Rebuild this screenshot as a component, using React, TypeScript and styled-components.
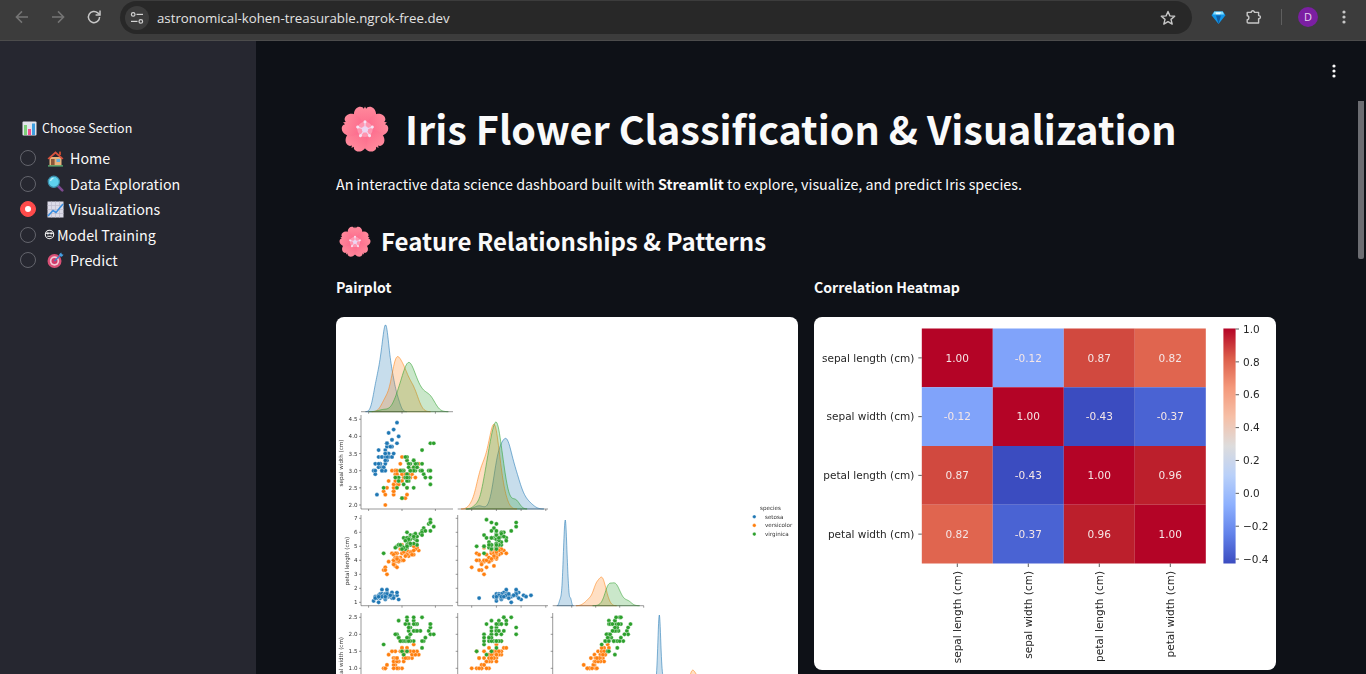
import React from "react";
import styled, { createGlobalStyle } from "styled-components";

const Global = createGlobalStyle`
  html, body { margin: 0; padding: 0; height: 100%; overflow: hidden; background: #0e1117; }
  * { box-sizing: border-box; }
  #root { height: 100%; }
`;

const SANS = `"Noto Sans CJK SC", "Noto Sans", sans-serif`;
const MPL = `"DejaVu Sans", sans-serif`;

const Page = styled.div`
  display: flex;
  flex-direction: column;
  height: 674px;
  overflow: hidden;
  font-family: ${SANS};
  color: #fafafa;
`;

/* ---------- browser chrome ---------- */
const Toolbar = styled.header`
  display: flex;
  align-items: flex-start;
  flex: 0 0 41px;
  height: 41px;
  background: #3c3c3c;
  border-bottom: 1px solid #4c4c4c;
`;
const NavButton = styled.span<{ $w: number }>`
  display: flex;
  align-items: center;
  justify-content: center;
  flex: 0 0 ${(p) => p.$w}px;
  height: 34px;
`;
const Omnibox = styled.div`
  display: flex;
  align-items: center;
  flex: 0 0 1072px;
  height: 33px;
  margin: 1px 0 0 4px;
  padding: 0 16px 0 5px;
  background: #282828;
  border-radius: 17px;
`;
const TuneBadge = styled.span`
  display: flex;
  align-items: center;
  justify-content: center;
  flex: 0 0 24px;
  height: 24px;
  border-radius: 50%;
  background: #3c3c3c;
`;
const Url = styled.span`
  flex: 1;
  margin-left: 8px;
  font: 400 13.25px/20px "Open Sans", sans-serif;
  color: #e3e3e3;
`;
const Divider = styled.span`
  flex: 0 0 1px;
  height: 16px;
  margin: 9px 16px 0 17px;
  background: #5f5f5f;
`;
const Avatar = styled.span`
  display: flex;
  align-items: center;
  justify-content: center;
  flex: 0 0 20px;
  height: 20px;
  margin-top: 7px;
  border-radius: 50%;
  background: #7b1fa2;
  color: #e8d5f0;
  font: 400 11px/20px "Open Sans", sans-serif;
`;

const Body = styled.div`
  display: flex;
  flex: 1;
  min-height: 0;
`;

/* ---------- sidebar ---------- */
const Sidebar = styled.aside`
  flex: 0 0 256px;
  background: #262730;
  padding: 77px 0 0 20px;
`;
const SectionLabel = styled.div`
  display: flex;
  align-items: center;
  gap: 5px;
  height: 20px;
  padding-left: 2px;
  font-size: 12.5px;
  line-height: 20px;
  color: #fafafa;
  margin-bottom: 7.5px;
`;
const RadioRow = styled.div<{ $gap: number; $labelGap: number }>`
  display: flex;
  align-items: center;
  height: 25.5px;
  font-size: 14.3px;
  line-height: 20px;
  color: #fafafa;
  & > svg { margin-left: ${(p) => p.$gap}px; margin-right: ${(p) => p.$labelGap}px; flex: none; }
`;
const RadioDot = styled.span<{ $on?: boolean }>`
  display: flex;
  align-items: center;
  justify-content: center;
  flex: 0 0 16px;
  height: 16px;
  border-radius: 50%;
  border: 1px solid ${(p) => (p.$on ? "#ff4b4b" : "#63646c")};
  background: ${(p) => (p.$on ? "#ff4b4b" : "transparent")};
  &::after {
    content: "";
    display: ${(p) => (p.$on ? "block" : "none")};
    width: 6px;
    height: 6px;
    border-radius: 50%;
    background: #fff;
  }
`;

/* ---------- main ---------- */
const Main = styled.main`
  position: relative;
  flex: 1;
  min-width: 0;
  overflow: hidden;
  background: #0e1117;
  padding: 0 90px 0 80px;
`;
const Kebab = styled.span`
  position: absolute;
  top: 23px;
  right: 30px;
  display: flex;
`;
const Thumb = styled.span`
  position: absolute;
  top: 60px;
  right: 2px;
  width: 6px;
  height: 158px;
  background: #6c6d72;
  border-radius: 0 0 2px 2px;
`;
const Title = styled.h1`
  display: flex;
  align-items: center;
  margin: 58px 0 0;
  height: 58px;
  padding-left: 5px;
  font-size: 39.5px;
  line-height: 58px;
  font-weight: 700;
  color: #fafafa;
  white-space: nowrap;
  & > svg { margin-right: 16px; flex: none; }
`;
const Lead = styled.p`
  margin: 15px 0 0;
  height: 24px;
  font-size: 14.3px;
  line-height: 24px;
  color: #fafafa;
  white-space: nowrap;
  & b { font-weight: 700; }
`;
const SubTitle = styled.h2`
  display: flex;
  align-items: center;
  margin: 25px 0 0;
  height: 40px;
  padding-left: 3px;
  font-size: 24px;
  line-height: 40px;
  font-weight: 600;
  color: #fafafa;
  white-space: nowrap;
  & > svg { margin-right: 10px; flex: none; }
`;
const Columns = styled.div`
  display: grid;
  grid-template-columns: 462px 462px;
  column-gap: 16px;
  margin-top: 16px;
`;
const ColHead = styled.h3`
  margin: 0 0 20px;
  height: 20px;
  font-size: 14.1px;
  line-height: 20px;
  font-weight: 600;
  color: #fafafa;
`;
const ImageCard = styled.div<{ $h: number }>`
  width: 462px;
  height: ${(p) => p.$h}px;
  background: #fff;
  border-radius: 8px;
  overflow: hidden;
  & > svg { display: block; }
`;

/* ---------- emoji drawings ---------- */
const Blossom = ({ size }: { size: number }) => {
  const id = `bl${size}`;
  const petal =
    "M50 53 C38 44 25 34 27 20 C28 9 38 3 45 7 L47.5 10 L50 5 L52.5 10 L55 7 C62 3 72 9 73 20 C75 34 62 44 50 53Z";
  return (
    <svg width={size} height={size} viewBox="0 0 100 100">
      <defs>
        <linearGradient id={id} x1="0" y1="0" x2="0" y2="1">
          <stop offset="0" stopColor="#ff8a9c" />
          <stop offset="0.65" stopColor="#fd7390" />
          <stop offset="1" stopColor="#ff5b92" />
        </linearGradient>
      </defs>
      <g fill={`url(#${id})`}>
        {[0, 72, 144, 216, 288].map((a) => (
          <path key={a} d={petal} transform={`rotate(${a} 50 53)`} />
        ))}
      </g>
      <circle cx="50" cy="53" r="16" fill="#ffa9bd" opacity="0.7" />
      <g stroke="#f0d6f0" strokeWidth="2.4" strokeLinecap="round">
        {[0, 72, 144, 216, 288].map((a) => (
          <line key={a} x1="50" y1="53" x2="50" y2="38" transform={`rotate(${a} 50 53)`} />
        ))}
      </g>
      <g fill="#f5e3f4">
        {[0, 72, 144, 216, 288].map((a) => (
          <circle key={a} cx="50" cy="37" r="3.2" transform={`rotate(${a} 50 53)`} />
        ))}
      </g>
      <circle cx="50" cy="53" r="6.5" fill="#ecd6f2" />
    </svg>
  );
};

const BarsEmoji = () => (
  <svg width="15" height="15" viewBox="0 0 15 15">
    <rect x="0.5" y="0.5" width="14" height="14" rx="1" fill="#e4e4ec" />
    <rect x="2" y="4" width="3" height="10" fill="#7ed07a" />
    <rect x="6" y="8" width="3" height="6" fill="#f0508f" />
    <rect x="10" y="2.5" width="3" height="11.5" fill="#3f9fe0" />
  </svg>
);
const HouseEmoji = () => (
  <svg width="17" height="17" viewBox="0 0 17 17">
    <rect x="2.5" y="7" width="12" height="8.5" fill="#e8b37c" />
    <path d="M0.5 8.5 L8.5 1.2 L16.5 8.5 L15 9.4 L8.5 3.8 L2 9.4Z" fill="#d9533e" />
    <rect x="12" y="1.6" width="2" height="3.4" fill="#c2482f" />
    <rect x="4" y="9" width="3.6" height="6.4" fill="#8a5738" />
    <rect x="9.5" y="9" width="3.6" height="3" fill="#5fb0dc" />
    <rect x="1" y="15.3" width="15" height="1.2" fill="#5dbb78" />
  </svg>
);
const LensEmoji = () => (
  <svg width="17" height="17" viewBox="0 0 17 17">
    <line x1="10.5" y1="10.5" x2="15.3" y2="15.3" stroke="#7d4a8f" strokeWidth="2.6" strokeLinecap="round" />
    <circle cx="6.8" cy="6.8" r="5.6" fill="#5ed2ee" stroke="#3d8ba8" strokeWidth="1.2" />
    <path d="M3.5 6 A3.6 3.6 0 0 1 6.5 3.2" stroke="#c4f1fb" strokeWidth="1.2" fill="none" />
  </svg>
);
const ChartEmoji = () => (
  <svg width="17" height="17" viewBox="0 0 17 17">
    <rect x="0.5" y="0.5" width="16" height="16" fill="#dcdbe8" />
    <path d="M0.5 4.5H16.5M0.5 8.5H16.5M0.5 12.5H16.5M4.5 0.5V16.5M8.5 0.5V16.5M12.5 0.5V16.5" stroke="#bdbccd" strokeWidth="0.7" />
    <path d="M1 15 L6 9.5 L9 11.5 L16 3" fill="none" stroke="#3a8ee0" strokeWidth="1.6" />
  </svg>
);
const BotGlyph = () => (
  <svg width="11" height="11" viewBox="0 0 10 11">
    <circle cx="5" cy="5.5" r="4.2" fill="none" stroke="#f2f2f2" strokeWidth="1.1" />
    <path d="M1.5 4.2H8.5" stroke="#f2f2f2" strokeWidth="1.2" />
    <circle cx="3.3" cy="4.6" r="1" fill="#f2f2f2" />
    <circle cx="6.7" cy="4.6" r="1" fill="#f2f2f2" />
    <path d="M2.8 7.3H7.2" stroke="#f2f2f2" strokeWidth="1.1" />
  </svg>
);
const TargetEmoji = () => (
  <svg width="17" height="17" viewBox="0 0 17 17">
    <circle cx="7.5" cy="9" r="7" fill="#d94f75" />
    <circle cx="7.5" cy="9" r="4.7" fill="#f3c9d4" />
    <circle cx="7.5" cy="9" r="3" fill="#d2386a" />
    <line x1="7.5" y1="9" x2="14" y2="2.5" stroke="#3c84c8" strokeWidth="1.3" />
    <path d="M12.2 2.2 L14.2 0.4 L14.8 2.2 L16.6 2.8 L14.8 4.8 L12.8 4.2Z" fill="#45a0e6" />
  </svg>
);

/* ---------- iris data ---------- */
const RAW: number[][][] = [
  [[5.1,3.5,1.4,.2],[4.9,3,1.4,.2],[4.7,3.2,1.3,.2],[4.6,3.1,1.5,.2],[5,3.6,1.4,.2],[5.4,3.9,1.7,.4],[4.6,3.4,1.4,.3],[5,3.4,1.5,.2],[4.4,2.9,1.4,.2],[4.9,3.1,1.5,.1],[5.4,3.7,1.5,.2],[4.8,3.4,1.6,.2],[4.8,3,1.4,.1],[4.3,3,1.1,.1],[5.8,4,1.2,.2],[5.7,4.4,1.5,.4],[5.4,3.9,1.3,.4],[5.1,3.5,1.4,.3],[5.7,3.8,1.7,.3],[5.1,3.8,1.5,.3],[5.4,3.4,1.7,.2],[5.1,3.7,1.5,.4],[4.6,3.6,1,.2],[5.1,3.3,1.7,.5],[4.8,3.4,1.9,.2],[5,3,1.6,.2],[5,3.4,1.6,.4],[5.2,3.5,1.5,.2],[5.2,3.4,1.4,.2],[4.7,3.2,1.6,.2],[4.8,3.1,1.6,.2],[5.4,3.4,1.5,.4],[5.2,4.1,1.5,.1],[5.5,4.2,1.4,.2],[4.9,3.1,1.5,.1],[5,3.2,1.2,.2],[5.5,3.5,1.3,.2],[4.9,3.1,1.5,.1],[4.4,3,1.3,.2],[5.1,3.4,1.5,.2],[5,3.5,1.3,.3],[4.5,2.3,1.3,.3],[4.4,3.2,1.3,.2],[5,3.5,1.6,.6],[5.1,3.8,1.9,.4],[4.8,3,1.4,.3],[5.1,3.8,1.6,.2],[4.6,3.2,1.4,.2],[5.3,3.7,1.5,.2],[5,3.3,1.4,.2]],
  [[7,3.2,4.7,1.4],[6.4,3.2,4.5,1.5],[6.9,3.1,4.9,1.5],[5.5,2.3,4,1.3],[6.5,2.8,4.6,1.5],[5.7,2.8,4.5,1.3],[6.3,3.3,4.7,1.6],[4.9,2.4,3.3,1],[6.6,2.9,4.6,1.3],[5.2,2.7,3.9,1.4],[5,2,3.5,1],[5.9,3,4.2,1.5],[6,2.2,4,1],[6.1,2.9,4.7,1.4],[5.6,2.9,3.6,1.3],[6.7,3.1,4.4,1.4],[5.6,3,4.5,1.5],[5.8,2.7,4.1,1],[6.2,2.2,4.5,1.5],[5.6,2.5,3.9,1.1],[5.9,3.2,4.8,1.8],[6.1,2.8,4,1.3],[6.3,2.5,4.9,1.5],[6.1,2.8,4.7,1.2],[6.4,2.9,4.3,1.3],[6.6,3,4.4,1.4],[6.8,2.8,4.8,1.4],[6.7,3,5,1.7],[6,2.9,4.5,1.5],[5.7,2.6,3.5,1],[5.5,2.4,3.8,1.1],[5.5,2.4,3.7,1],[5.8,2.7,3.9,1.2],[6,2.7,5.1,1.6],[5.4,3,4.5,1.5],[6,3.4,4.5,1.6],[6.7,3.1,4.7,1.5],[6.3,2.3,4.4,1.3],[5.6,3,4.1,1.3],[5.5,2.5,4,1.3],[5.5,2.6,4.4,1.2],[6.1,3,4.6,1.4],[5.8,2.6,4,1.2],[5,2.3,3.3,1],[5.6,2.7,4.2,1.3],[5.7,3,4.2,1.2],[5.7,2.9,4.2,1.3],[6.2,2.9,4.3,1.3],[5.1,2.5,3,1.1],[5.7,2.8,4.1,1.3]],
  [[6.3,3.3,6,2.5],[5.8,2.7,5.1,1.9],[7.1,3,5.9,2.1],[6.3,2.9,5.6,1.8],[6.5,3,5.8,2.2],[7.6,3,6.6,2.1],[4.9,2.5,4.5,1.7],[7.3,2.9,6.3,1.8],[6.7,2.5,5.8,1.8],[7.2,3.6,6.1,2.5],[6.5,3.2,5.1,2],[6.4,2.7,5.3,1.9],[6.8,3,5.5,2.1],[5.7,2.5,5,2],[5.8,2.8,5.1,2.4],[6.4,3.2,5.3,2.3],[6.5,3,5.5,1.8],[7.7,3.8,6.7,2.2],[7.7,2.6,6.9,2.3],[6,2.2,5,1.5],[6.9,3.2,5.7,2.3],[5.6,2.8,4.9,2],[7.7,2.8,6.7,2],[6.3,2.7,4.9,1.8],[6.7,3.3,5.7,2.1],[7.2,3.2,6,1.8],[6.2,2.8,4.8,1.8],[6.1,3,4.9,1.8],[6.4,2.8,5.6,2.1],[7.2,3,5.8,1.6],[7.4,2.8,6.1,1.9],[7.9,3.8,6.4,2],[6.4,2.8,5.6,2.2],[6.3,2.8,5.1,1.5],[6.1,2.6,5.6,1.4],[7.7,3,6.1,2.3],[6.3,3.4,5.6,2.4],[6.4,3.1,5.5,1.8],[6,3,4.8,1.8],[6.9,3.1,5.4,2.1],[6.7,3.1,5.6,2.4],[6.9,3.1,5.1,2.3],[5.8,2.7,5.1,1.9],[6.8,3.2,5.9,2.3],[6.7,3.3,5.7,2.5],[6.7,3,5.2,2.3],[6.3,2.5,5,1.9],[6.5,3,5.2,2],[6.2,3.4,5.4,2.3],[5.9,3,5.1,1.8]],
];
const HUES = ["#1f77b4", "#ff7f0e", "#2ca02c"];

const xScale = [
  (v: number) => 368.6 + 16.7 * (v - 4),
  (v: number) => 471.7 + 24.7 * (v - 2),
  (v: number) => 571.7 + 12 * (v - 2),
  (v: number) => 653.4 + 29.5 * v,
];
const yScale = [
  (_: number) => 0,
  (v: number) => 505 - 34.3 * (v - 2),
  (v: number) => 602.3 - 14 * (v - 1),
  (v: number) => 668.3 - 34 * (v - 1),
];
const colX: [number, number][] = [[361, 453], [457.7, 548], [552.7, 643.7], [648, 740]];
const rowY: [number, number][] = [[320, 411.7], [415, 509], [515, 605.7], [613, 705]];
const diagPeak = [325, 422, 520, 615];
const xTicks = [[4, 6, 8], [2, 3, 4, 5], [2, 4, 6, 8], [0, 1, 2, 3]];
const yTicks: Record<number, number[]> = {
  1: [2, 2.5, 3, 3.5, 4, 4.5],
  2: [1, 2, 3, 4, 5, 6, 7],
  3: [1, 1.5, 2, 2.5],
};
const yLabels: Record<number, { t: string; x: number; y: number }> = {
  1: { t: "sepal width (cm)", x: 343, y: 463 },
  2: { t: "petal length (cm)", x: 349, y: 561 },
  3: { t: "petal width (cm)", x: 343, y: 660 },
};

function kde(vals: number[]) {
  const n = vals.length;
  const mean = vals.reduce((a, b) => a + b, 0) / n;
  const sd = Math.sqrt(vals.reduce((a, b) => a + (b - mean) ** 2, 0) / (n - 1));
  const bw = sd * Math.pow(n, -0.2);
  const lo = Math.min(...vals) - 3 * bw;
  const hi = Math.max(...vals) + 3 * bw;
  const pts: [number, number][] = [];
  for (let i = 0; i <= 100; i++) {
    const x = lo + ((hi - lo) * i) / 100;
    let d = 0;
    for (const v of vals) d += Math.exp(-0.5 * ((x - v) / bw) ** 2);
    pts.push([x, d / (n * bw * Math.sqrt(2 * Math.PI))]);
  }
  return pts;
}

const Diagonal = ({ i }: { i: number }) => {
  const base = rowY[i][1];
  const curves = RAW.map((g) => kde(g.map((r) => r[i])));
  const max = Math.max(...curves.flat().map((p) => p[1]));
  const k = (base - diagPeak[i]) / max;
  return (
    <g>
      {curves.map((c, h) => {
        const d = c.map((p, j) => `${j ? "L" : "M"}${xScale[i](p[0]).toFixed(2)} ${(base - p[1] * k).toFixed(2)}`).join("");
        return (
          <path key={h} d={`${d}L${xScale[i](c[100][0]).toFixed(2)} ${base}L${xScale[i](c[0][0]).toFixed(2)} ${base}Z`}
            fill={HUES[h]} fillOpacity={0.25} stroke={HUES[h]} strokeOpacity={0.8} strokeWidth={0.7} />
        );
      })}
    </g>
  );
};

const Axes = ({ row, col }: { row: number; col: number }) => {
  const [x0, x1] = colX[col];
  const [y0, y1] = rowY[row];
  return (
    <g stroke="#555" strokeWidth={0.6}>
      <line x1={x0} x2={x1} y1={y1} y2={y1} />
      {row !== col && <line x1={x0} x2={x0} y1={y0} y2={y1} />}
      {xTicks[col].map((t) => (
        <line key={t} x1={xScale[col](t)} x2={xScale[col](t)} y1={y1} y2={y1 + 2} />
      ))}
      {row !== col && yTicks[row].map((t) => (
        <line key={t} x1={x0 - 2} x2={x0} y1={yScale[row](t)} y2={yScale[row](t)} />
      ))}
    </g>
  );
};

const PairPlot = () => {
  const cells: [number, number][] = [];
  for (let r = 0; r < 4; r++) for (let c = 0; c <= r; c++) cells.push([r, c]);
  return (
    <svg width="462" height="600" viewBox="336 317 462 600" style={{ filter: "blur(0.45px)" }}>
      {cells.map(([r, c]) =>
        r === c ? <Diagonal key={`${r}${c}`} i={r} /> : (
          <g key={`${r}${c}`}>
            {RAW.map((g, h) =>
              g.map((p, j) => (
                <circle key={`${h}-${j}`} cx={xScale[c](p[c])} cy={yScale[r](p[r])} r={2.1} fill={HUES[h]} stroke="#fff" strokeWidth={0.35} />
              ))
            )}
          </g>
        )
      )}
      {cells.map(([r, c]) => <Axes key={`a${r}${c}`} row={r} col={c} />)}
      <g fontFamily={MPL} fontSize="5.6" fill="#333">
        {[1, 2, 3].map((r) =>
          yTicks[r].map((t) => (
            <text key={`${r}-${t}`} x={357.5} y={yScale[r](t) + 2} textAnchor="end">
              {r === 2 ? String(t) : t.toFixed(1)}
            </text>
          ))
        )}
        {[1, 2, 3].map((r) => (
          <text key={r} textAnchor="middle" transform={`translate(${yLabels[r].x} ${yLabels[r].y}) rotate(-90)`}>
            {yLabels[r].t}
          </text>
        ))}
        <text x={760} y={509.7}>species</text>
        {["setosa", "versicolor", "virginica"].map((s, i) => (
          <g key={s}>
            <circle cx={754.3} cy={516.7 + i * 8.7} r={1.8} fill={HUES[i]} stroke="#fff" strokeWidth={0.3} />
            <text x={765} y={518.7 + i * 8.7}>{s}</text>
          </g>
        ))}
      </g>
    </svg>
  );
};

/* ---------- heatmap ---------- */
const NAMES = ["sepal length (cm)", "sepal width (cm)", "petal length (cm)", "petal width (cm)"];
const CORR = [
  ["1.00", "-0.12", "0.87", "0.82"],
  ["-0.12", "1.00", "-0.43", "-0.37"],
  ["0.87", "-0.43", "1.00", "0.96"],
  ["0.82", "-0.37", "0.96", "1.00"],
];
const HEAT: Record<string, string> = {
  "1.00": "#b40426",
  "-0.12": "#80a3fa",
  "0.87": "#d1493f",
  "0.82": "#e0654f",
  "-0.43": "#3b4cc0",
  "-0.37": "#4a63d3",
  "0.96": "#bc1f2c",
};
const HX = 921.8, HY = 328.5, CW = 71, CH = 58.75;
const BAR = ["1.0", "0.8", "0.6", "0.4", "0.2", "0.0", "−0.2", "−0.4"];

const Heatmap = () => (
  <svg width="462" height="353" viewBox="814 317 462 353" style={{ filter: "blur(0.2px)" }}>
    <defs>
      <linearGradient id="cw" x1="0" y1="1" x2="0" y2="0">
        <stop offset="0" stopColor="#3b4cc0" />
        <stop offset="0.125" stopColor="#6282ea" />
        <stop offset="0.25" stopColor="#8db0fe" />
        <stop offset="0.375" stopColor="#b9d0f9" />
        <stop offset="0.5" stopColor="#dddcdc" />
        <stop offset="0.625" stopColor="#f6bfa6" />
        <stop offset="0.75" stopColor="#f4987a" />
        <stop offset="0.875" stopColor="#dc5d4a" />
        <stop offset="1" stopColor="#b40426" />
      </linearGradient>
    </defs>
    {CORR.map((row, r) =>
      row.map((v, c) => (
        <g key={`${r}-${c}`}>
          <rect x={HX + c * CW} y={HY + r * CH} width={CW} height={CH} fill={HEAT[v]} />
          <text x={HX + c * CW + CW / 2} y={HY + r * CH + CH / 2 + 3.8} textAnchor="middle" fontFamily={MPL} fontSize="10.5" fill="#f5e6e6">{v}</text>
        </g>
      ))
    )}
    {NAMES.map((n, i) => (
      <g key={n} fontFamily={MPL} fontSize="10.5" fill="#262626">
        <line x1={HX - 3.5} x2={HX} y1={HY + (i + 0.5) * CH} y2={HY + (i + 0.5) * CH} stroke="#333" strokeWidth={0.8} />
        <text x={HX - 7.5} y={HY + (i + 0.5) * CH + 3.7} textAnchor="end">{n}</text>
        <line x1={HX + (i + 0.5) * CW} x2={HX + (i + 0.5) * CW} y1={563.5} y2={567} stroke="#333" strokeWidth={0.8} />
        <text textAnchor="end" transform={`translate(${HX + (i + 0.5) * CW + 3.7} 571) rotate(-90)`}>{n}</text>
      </g>
    ))}
    <rect x={1223.4} y={328.5} width={12.2} height={235} fill="url(#cw)" />
    {BAR.map((b, i) => (
      <g key={b} fontFamily={MPL} fontSize="10.5" fill="#262626">
        <line x1={1235.6} x2={1239} y1={329 + i * 32.87} y2={329 + i * 32.87} stroke="#333" strokeWidth={0.8} />
        <text x={1243} y={329 + i * 32.87 + 3.7}>{b}</text>
      </g>
    ))}
  </svg>
);

/* ---------- app ---------- */
const ArrowIcon = ({ dir, color }: { dir: "l" | "r"; color: string }) => (
  <svg width="16" height="16" viewBox="0 0 16 16" fill="none" stroke={color} strokeWidth="1.5">
    {dir === "l" ? <path d="M14 8H2.5M8 2.4 2.4 8 8 13.6" /> : <path d="M2 8h11.5M8 2.4 13.6 8 8 13.6" />}
  </svg>
);

const SECTIONS = [
  { label: "Home", icon: <HouseEmoji />, gap: 11, lg: 6 },
  { label: "Data Exploration", icon: <LensEmoji />, gap: 11, lg: 6 },
  { label: "Visualizations", icon: <ChartEmoji />, gap: 11, lg: 5, on: true },
  { label: "Model Training", icon: <BotGlyph />, gap: 7.5, lg: 2.5 },
  { label: "Predict", icon: <TargetEmoji />, gap: 11, lg: 6 },
];

export default function App() {
  return (
    <Page>
      <Global />
      <Toolbar>
        <NavButton $w={44}><ArrowIcon dir="l" color="#757575" /></NavButton>
        <NavButton $w={28}><ArrowIcon dir="r" color="#757575" /></NavButton>
        <NavButton $w={44}>
          <svg width="16" height="16" viewBox="0 0 16 16" fill="none" stroke="#c7c7c7" strokeWidth="1.5">
            <path d="M13.6 8A5.6 5.6 0 1 1 11.8 3.9L13.8 5.6" />
            <path d="M14 1.6V6H9.6" />
          </svg>
        </NavButton>
        <Omnibox>
          <TuneBadge>
            <svg width="14" height="14" viewBox="0 0 14 14" fill="none" stroke="#d4d4d4" strokeWidth="1.2">
              <circle cx="3.2" cy="3.4" r="1.8" />
              <path d="M6.5 3.4H13" />
              <circle cx="10.8" cy="10.4" r="1.8" />
              <path d="M1 10.4H7.5" />
            </svg>
          </TuneBadge>
          <Url>astronomical-kohen-treasurable.ngrok-free.dev</Url>
          <svg width="16" height="16" viewBox="0 0 16 16" fill="none" stroke="#c7c7c7" strokeWidth="1.4" strokeLinejoin="round">
            <path d="M8 1.5 9.9 5.9 14.7 6.3 11 9.4 12.2 14.1 8 11.6 3.8 14.1 5 9.4 1.3 6.3 6.1 5.9Z" />
          </svg>
        </Omnibox>
        <NavButton $w={52}>
          <svg width="15" height="15" viewBox="0 0 15 15">
            <path d="M3.2 1.5H11.8L14.5 5.2 7.5 14 .5 5.2Z" fill="#1296e8" />
            <path d="M3.2 1.5H11.8L13 4.6H2Z" fill="#7fdcff" />
            <path d="M4.5 2.2H10L9 4.2H5.2Z" fill="#eafaff" />
            <path d="M5 5.5H10L7.5 14Z" fill="#0d5fa8" />
          </svg>
        </NavButton>
        <NavButton $w={20}>
          <svg width="16" height="16" viewBox="0 0 16 16" fill="none" stroke="#c7c7c7" strokeWidth="1.4" strokeLinejoin="round">
            <path d="M1.2 3.4H5.2C5 1.2 8.6 1.2 8.4 3.4H12.6V6.6C15 6.4 15 9.8 12.6 9.6V14H2.2C1.6 14 1.2 13.6 1.2 13V10.6C3.4 10.6 3.4 6.8 1.2 6.8Z" />
          </svg>
        </NavButton>
        <Divider />
        <Avatar>D</Avatar>
        <NavButton $w={52}>
          <svg width="4" height="16" viewBox="0 0 4 16" fill="#c7c7c7">
            <circle cx="2" cy="3" r="1.6" /><circle cx="2" cy="8" r="1.6" /><circle cx="2" cy="13" r="1.6" />
          </svg>
        </NavButton>
      </Toolbar>
      <Body>
        <Sidebar>
          <SectionLabel><BarsEmoji />Choose Section</SectionLabel>
          {SECTIONS.map((s) => (
            <RadioRow key={s.label} $gap={s.gap} $labelGap={s.lg}>
              <RadioDot $on={s.on} />
              {s.icon}
              {s.label}
            </RadioRow>
          ))}
        </Sidebar>
        <Main>
          <Kebab>
            <svg width="4" height="14" viewBox="0 0 4 14" fill="#fafafa">
              <circle cx="2" cy="2" r="1.6" /><circle cx="2" cy="7" r="1.6" /><circle cx="2" cy="12" r="1.6" />
            </svg>
          </Kebab>
          <Thumb />
          <Title><Blossom size={48} />Iris Flower Classification &amp; Visualization</Title>
          <Lead>An interactive data science dashboard built with <b>Streamlit</b> to explore, visualize, and predict Iris species.</Lead>
          <SubTitle><Blossom size={32} />Feature Relationships &amp; Patterns</SubTitle>
          <Columns>
            <div>
              <ColHead>Pairplot</ColHead>
              <ImageCard $h={600}><PairPlot /></ImageCard>
            </div>
            <div>
              <ColHead>Correlation Heatmap</ColHead>
              <ImageCard $h={353}><Heatmap /></ImageCard>
            </div>
          </Columns>
        </Main>
      </Body>
    </Page>
  );
}
